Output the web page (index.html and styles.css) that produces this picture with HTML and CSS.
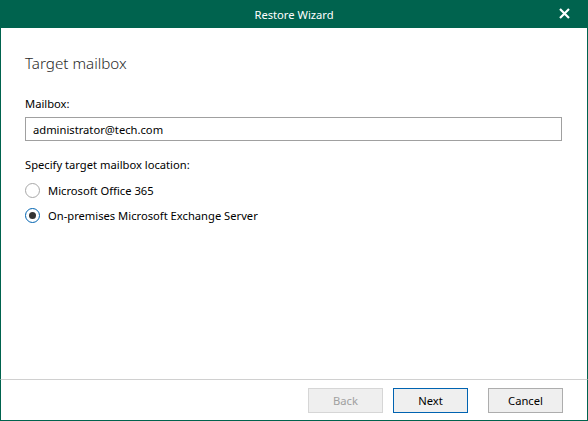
FILE: index.html
```html
<!DOCTYPE html>
<html lang="en">

<head>
    <meta charset="UTF-8">
    <title>Restore Wizard</title>
    <link rel="stylesheet" href="styles.css">
</head>

<body>

    <div class="window">
        <div class="title-bar">
            <span class="title">Restore Wizard</span>
            <button class="close-btn" aria-label="Close">
                <svg width="11" height="11" viewBox="0 0 11 11">
                    <path d="M1 1 L10 10 M10 1 L1 10" stroke="#fff" stroke-width="2.2" fill="none" />
                </svg>
            </button>
        </div>

        <div class="content">
            <h1 class="heading">Target mailbox</h1>

            <label class="field-label" for="mailbox">Mailbox:</label>
            <input id="mailbox" class="text-input" type="text" value="administrator@tech.com">

            <div class="group-label">Specify target mailbox location:</div>
            <label class="radio">
                <span class="radio-dot"></span>
                <span>Microsoft Office 365</span>
            </label>
            <label class="radio">
                <span class="radio-dot checked"></span>
                <span>On-premises Microsoft Exchange Server</span>
            </label>
        </div>

        <div class="footer">
            <button class="btn" disabled>Back</button>
            <button class="btn default">Next</button>
            <button class="btn cancel">Cancel</button>
        </div>
    </div>

</body>

</html>
```

FILE: styles.css
```css
body {
    margin: 0;
    font-family: "Noto Sans", "Open Sans", sans-serif;
    font-size: 11.2px;
    color: #000;
    background: #fff;
}

.window {
    width: 588px;
    height: 421px;
    display: flex;
    flex-direction: column;
    box-sizing: border-box;
}

.title-bar {
    height: 28px;
    flex-shrink: 0;
    background-color: #00634e;
    color: #fff;
    display: flex;
    align-items: center;
    justify-content: center;
    position: relative;
}

.title {
    font-size: 11.2px;
}

.close-btn {
    position: absolute;
    right: 18px;
    top: 8px;
    width: 11px;
    height: 11px;
    padding: 0;
    border: none;
    background: none;
    display: flex;
}

.content {
    flex: 1;
    display: flex;
    flex-direction: column;
    align-items: flex-start;
    padding: 25px 25px 0 24px;
    border-left: 1px solid #00634e;
    border-right: 1px solid #00634e;
}

.heading {
    margin: 0;
    font-size: 15.2px;
    font-weight: 300;
    line-height: 20px;
    color: #2a2a2a;
}

.field-label {
    margin-top: 23px;
    line-height: 16px;
}

.text-input {
    margin: 5px 0 0 0;
    width: 100%;
    height: 24px;
    box-sizing: border-box;
    border: 1px solid #a0a0a0;
    padding: 0 7px;
    font-family: inherit;
    font-size: 11.2px;
    outline: none;
}

.group-label {
    margin-top: 16px;
    line-height: 16px;
}

.radio {
    display: flex;
    align-items: center;
    gap: 8px;
    height: 16px;
    margin-top: 9px;
}

.radio-dot {
    width: 13px;
    height: 13px;
    border: 1px solid #a8a8a8;
    border-radius: 50%;
    display: flex;
    align-items: center;
    justify-content: center;
}

.radio-dot.checked {
    border-color: #0063b1;
}

.radio-dot.checked::after {
    content: "";
    width: 7px;
    height: 7px;
    border-radius: 50%;
    background: #333;
}

.footer {
    height: 42px;
    flex-shrink: 0;
    box-sizing: border-box;
    border-top: 1px solid #d0d0d0;
    border-left: 1px solid #00634e;
    border-right: 1px solid #00634e;
    border-bottom: 1px solid #00634e;
    display: flex;
    justify-content: flex-end;
    align-items: flex-start;
    padding: 8px 24px 0 0;
    gap: 10px;
}

.btn {
    width: 75px;
    height: 25px;
    background-color: #efefef;
    border: 1px solid #adadad;
    font-family: inherit;
    font-size: 11.2px;
    color: #000;
    padding: 0;
}

.btn:disabled {
    border-color: #d6d6d6;
    color: #a0a0a0;
}

.btn.default {
    border-color: #0063b1;
}

.btn.cancel {
    margin-left: 10px;
}
```
